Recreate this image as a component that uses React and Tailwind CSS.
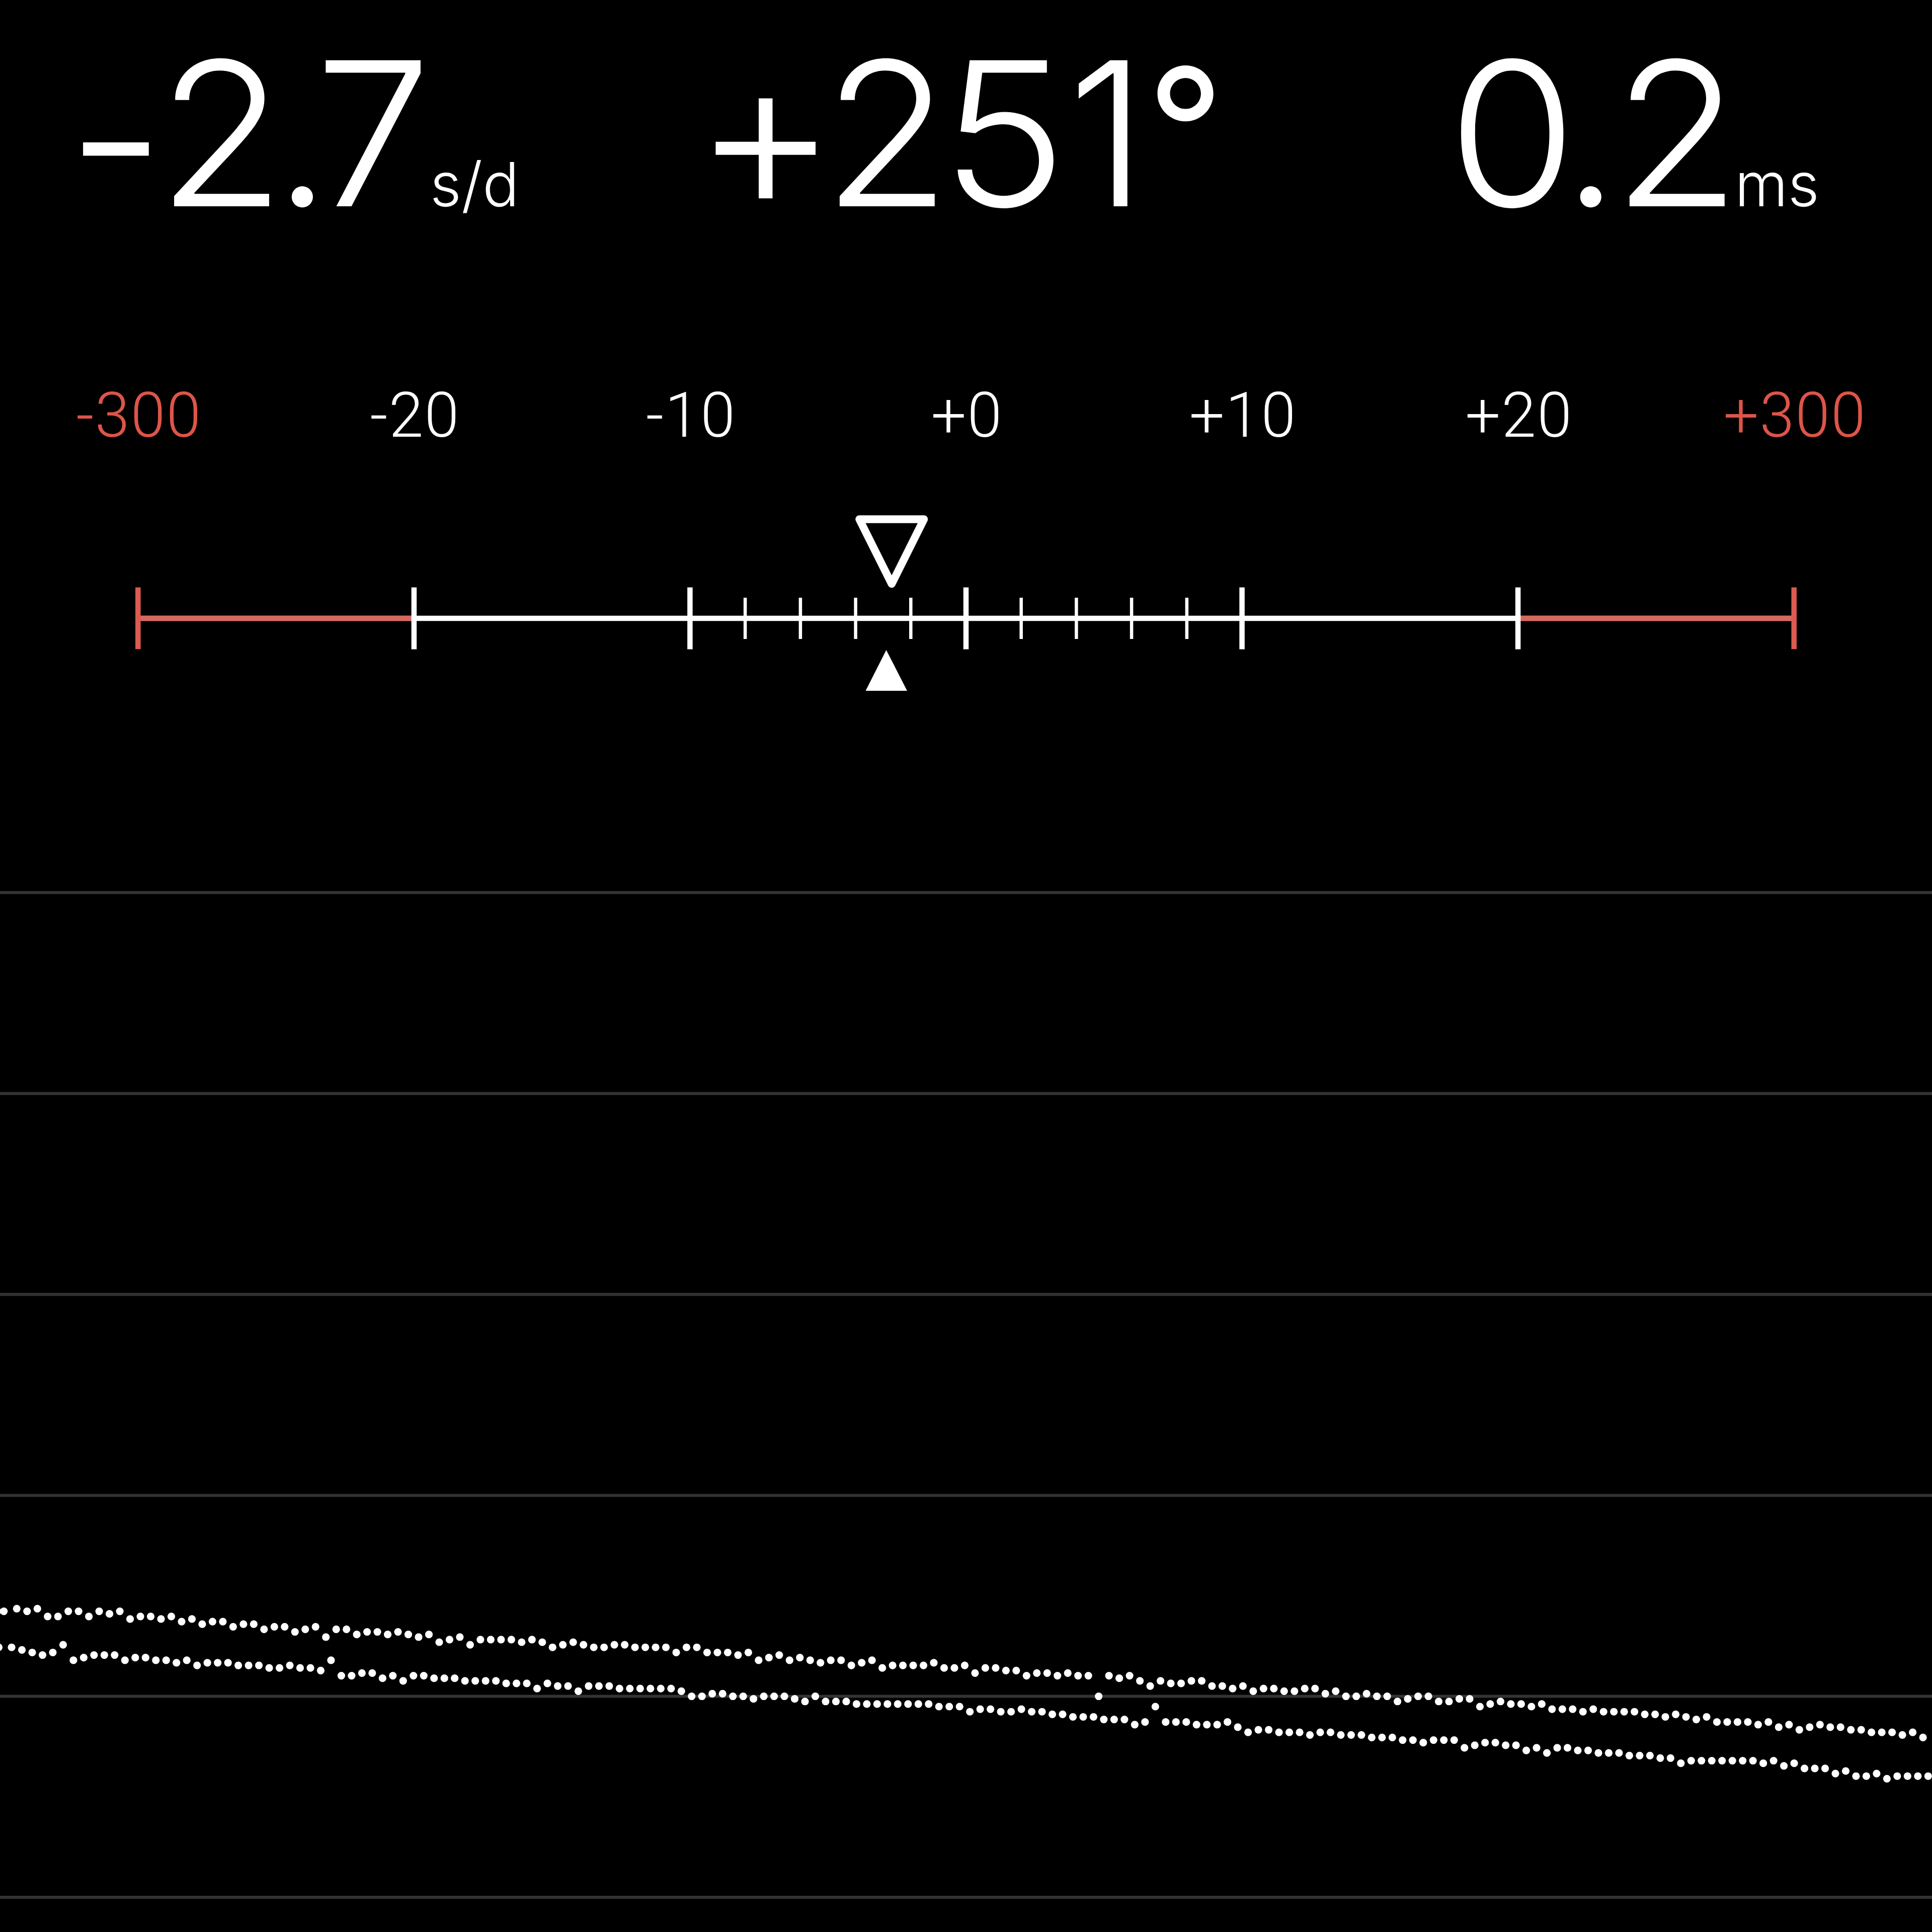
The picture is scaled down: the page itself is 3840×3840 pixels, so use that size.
import React from "react";

// one plot cell in pixels
const UNIT = 5.12;

const tickTrace = [
  624, 625, 624, 627, 627, 625, 625, 627, 625, 626, 625, 628, 627, 627, 628, 627, 629, 628, 630, 629, 629, 631, 630, 630, 632, 631, 631, 633, 632, 631, 635,
  632, 632, 634, 633, 633, 634, 633, 634, 635, 634, 637, 636, 635, 638, 636, 636, 636, 636, 637, 636, 637, 639, 638, 637, 638, 639, 639, 638, 638, 639, 639,
  639, 639, 641, 639, 639, 641, 641, 641, 642, 641, 644, 643, 642, 644, 643, 644, 645, 644, 644, 646, 645, 644, 647, 646, 646, 646, 646, 645, 647, 647, 646, 649,
  647, 647, 648, 648, 650, 649, 649, 650, 649, 650, 650, 658, 650, 651, 650, 652, 654, 652, 653, 653, 652, 652, 654, 654, 655, 654, 656, 655, 655, 656, 656,
  655, 655, 657, 656, 658, 658, 657, 658, 658, 660, 659, 658, 658, 660, 660, 659, 659, 662, 661, 660, 661, 661, 662, 661, 663, 663, 663, 664, 663, 664, 664,
  664, 664, 665, 665, 666, 665, 666, 667, 666, 668, 668, 668, 668, 669, 668, 670, 669, 671, 670, 669, 670, 670, 671, 671, 672, 672, 672, 673, 672, 674,
];

const tockTrace = [
  639, 640, 641, 642, 641, 638, 644, 643, 642, 642, 642, 644, 643, 643, 644, 644, 645, 644, 646, 645, 645, 645, 646, 646, 646, 647, 647, 646, 647, 647, 648,
  644, 650, 650, 649, 649, 651, 650, 652, 650, 650, 651, 651, 651, 652, 652, 652, 652, 653, 653, 653, 655, 653, 654, 654, 656, 654, 654, 654, 655, 655, 655, 655,
  655, 655, 656, 658, 658, 657, 657, 658, 658, 659, 658, 658, 658, 659, 660, 658, 660, 660, 660, 661, 661, 661, 661, 661, 661, 661, 661, 662, 662, 662, 664,
  663, 663, 664, 664, 663, 664, 664, 665, 665, 666, 666, 666, 667, 667, 667, 669, 668, 662, 668, 668, 668, 669, 669, 669, 668, 670, 672, 671, 671, 672, 672,
  672, 673, 672, 672, 673, 673, 673, 674, 674, 674, 675, 675, 676, 675, 675, 675, 678, 677, 676, 676, 677, 677, 679, 678, 680, 678, 678, 679, 679, 680, 680, 680,
  681, 681, 681, 682, 682, 684, 683, 683, 683, 683, 683, 683, 683, 684, 683, 685, 684, 686, 686, 686, 688, 687, 689, 689, 688, 690, 689, 689, 689, 689,
];

const dots = [
  [-1, 625.5],
  [1.5, 625.5],
  [-0.5, 639.5],
  ...tickTrace.map((y, i) => [6.5 + i * 4, y + 0.5]),
  ...tockTrace.map((y, i) => [4.5 + i * 4, y + 0.5]),
];

const gridLines = [346.5, 424.5, 502.5, 580.5, 658.5, 736.5];

const labels = [
  { text: "-300", limit: true },
  { text: "-20" },
  { text: "-10" },
  { text: "+0" },
  { text: "+10" },
  { text: "+20" },
  { text: "+300", limit: true },
];

const majorTicks = [822.9, 1371.4, 1920, 2468.6, 3017.1];
const minorTicks = [1481.1, 1590.9, 1700.6, 1810.3, 2029.7, 2139.4, 2249.1, 2358.9];

function Readings() {
  return (
    <div className="flex h-[764px] items-start pt-[65px] font-['Inter'] text-[399px] leading-none font-[330] whitespace-nowrap">
      <div className="w-[1378px] pl-[133px]">
        <span className="align-[-20px] text-[430px] leading-[200px] tracking-[-11px]">-</span>
        <span className="inline-block scale-x-[1.04] tracking-[-17px]">2</span>
        <span className="font-light tracking-[-27px]">.</span>
        <span className="inline-block scale-x-[1.04]">7</span>
        <span className="ml-px text-[121px] font-light">s/d</span>
      </div>
      <div className="w-[1504px]">
        <span className="align-[-10px] text-[440px] leading-[200px] font-light tracking-[-25px]">+</span>
        <span className="inline-block scale-x-[1.04] tracking-[-8px]">2</span>
        <span className="mr-[8px] inline-block scale-x-[1.06]">5</span>
        <span>1</span>
        <span className="align-[32px] text-[338px] leading-[200px] font-[370]">°</span>
      </div>
      <div>
        <span className="inline-block scale-x-[1.04] tracking-[-23px]">0</span>
        <span className="font-light tracking-[-8px]">.</span>
        <span className="inline-block scale-x-[1.04] tracking-[-7px]">2</span>
        <span className="text-[121px] font-light">ms</span>
      </div>
    </div>
  );
}

function Scale() {
  return (
    <div>
      <div className="grid h-[136px] grid-cols-7 text-center indent-[4px] font-['Roboto'] text-[124px] leading-none font-light tracking-[2px]">
        {labels.map((label) => (
          <span key={label.text} className={label.limit ? "text-[#dd5549]" : "text-white"}>
            {label.text}
          </span>
        ))}
      </div>
      <svg className="block h-[600px] w-[3840px]" viewBox="0 900 3840 600" fill="none">
        <path d="M274 1229H823M3017 1229H3566" stroke="#d46a61" strokeWidth="11" />
        <path d="M274.3 1167.4V1290.2M3565.7 1167.4V1290.2" stroke="#dc5a50" strokeWidth="10.5" />
        <path d="M823 1229H3017" stroke="#fff" strokeWidth="10.5" />
        {majorTicks.map((x) => (
          <path key={x} d={`M${x} 1167.4V1290.6`} stroke="#fff" strokeWidth="10.5" />
        ))}
        {minorTicks.map((x) => (
          <path key={x} d={`M${x} 1188V1270`} stroke="#fff" strokeWidth="6.5" />
        ))}
        <path d="M1708 1032H1836.5L1772.3 1160.6Z" stroke="#fff" strokeWidth="15.4" strokeLinejoin="round" />
        <path d="M1761.5 1292L1803 1373H1720.5Z" fill="#fff" />
      </svg>
    </div>
  );
}

function Trace() {
  return (
    <svg className="block h-[2340px] w-[3840px]" viewBox="0 1500 3840 2340">
      {gridLines.map((y) => (
        <line key={y} x1="0" x2="3840" y1={y * UNIT} y2={y * UNIT} stroke="#333" strokeWidth="6" />
      ))}
      {dots.map(([x, y], i) => (
        <circle key={i} cx={x * UNIT} cy={y * UNIT} r="7.6" fill="#fff" />
      ))}
    </svg>
  );
}

function App() {
  return (
    <div className="h-[3840px] w-[3840px] overflow-hidden bg-black text-white">
      <Readings />
      <Scale />
      <Trace />
    </div>
  );
}

export default App;
